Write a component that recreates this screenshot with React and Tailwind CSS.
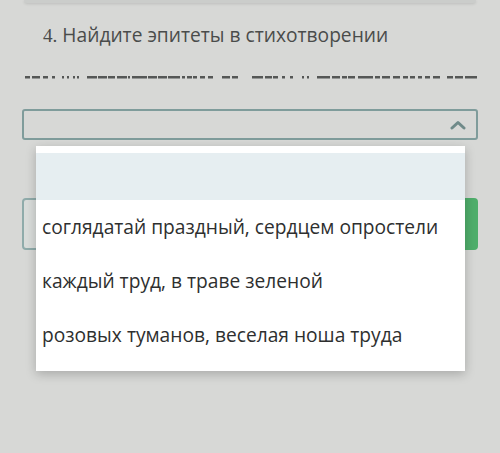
const dashes = [
  [25, 5], [32, 8], [43, 5], [52, 3], [62, 2], [67, 2], [73, 2], [77, 2],
  [87, 10], [98, 9], [108, 7], [117, 10], [128, 2], [132, 15], [148, 9],
  [158, 9], [168, 12], [182, 3], [187, 5], [193, 4], [200, 5], [208, 5],
  [222, 8], [232, 6],
  [252, 11], [265, 7], [273, 5], [282, 3], [290, 3], [302, 2], [307, 2],
  [317, 13], [332, 8], [342, 5], [348, 7], [358, 15], [375, 5], [382, 8],
  [393, 7], [403, 5], [410, 5], [418, 4], [425, 5], [433, 7], [447, 6],
  [455, 8], [465, 12],
];

const options = [
  "соглядатай праздный, сердцем опростели",
  "каждый труд, в траве зеленой",
  "розовых туманов, веселая ноша труда",
];

export default function App() {
  return (
    <div
      className="relative w-[500px] h-[453px] overflow-hidden bg-[#d7d8d6]"
      style={{ fontFamily: '"Open Sans", "Noto Sans", sans-serif' }}
    >
      {/* previous card edge */}
      <div className="mx-[24px] h-[3px] rounded-b bg-[#cbcdcb] shadow-[0_1px_3px_rgba(0,0,0,0.12)]" />

      <h2 className="mt-[18px] pl-[43px] text-[19.2px] leading-[28px] text-[#4a4c4b]">
        <span style={{ fontFamily: '"Liberation Serif", serif' }}>4.</span> Найдите эпитеты в стихотворении
      </h2>

      <svg width="500" height="6" className="mt-[25px] block">
        {dashes.map(([x, w], i) => (
          <rect key={i} x={x} y="1" width={w} height="2.5" fill="#555756" />
        ))}
      </svg>

      {/* select */}
      <div className="mt-[28px] mx-[22px] h-[31px] rounded-[3px] border-2 border-[#7f9c9b] flex items-center justify-end pr-[10px]">
        <svg width="16" height="10" viewBox="0 0 16 10">
          <path d="M2 8 L8 2.5 L14 8" fill="none" stroke="#6f8a89" strokeWidth="3" strokeLinecap="round" strokeLinejoin="round" />
        </svg>
      </div>

      {/* buttons behind dropdown */}
      <div className="mt-[58px] mx-[22px] flex gap-[16px]">
        <div className="flex-1 h-[52px] rounded-[4px] border-2 border-[#8fabaa] bg-[#d9dcda]" />
        <div className="flex-1 h-[52px] rounded-[4px] bg-[#4fae6b]" />
      </div>

      {/* dropdown */}
      <div className="absolute left-[36px] top-[146px] w-[429px] bg-white pt-[7px] pb-[9px] shadow-[0_3px_10px_rgba(0,0,0,0.22)]">
        <div className="h-[47px] bg-[#e6eef1]" />
        {options.map((o) => (
          <div key={o} className="h-[54px] flex items-center pl-[6px] text-[19.2px] text-[#2e2f2f]">
            {o}
          </div>
        ))}
      </div>
    </div>
  );
}
